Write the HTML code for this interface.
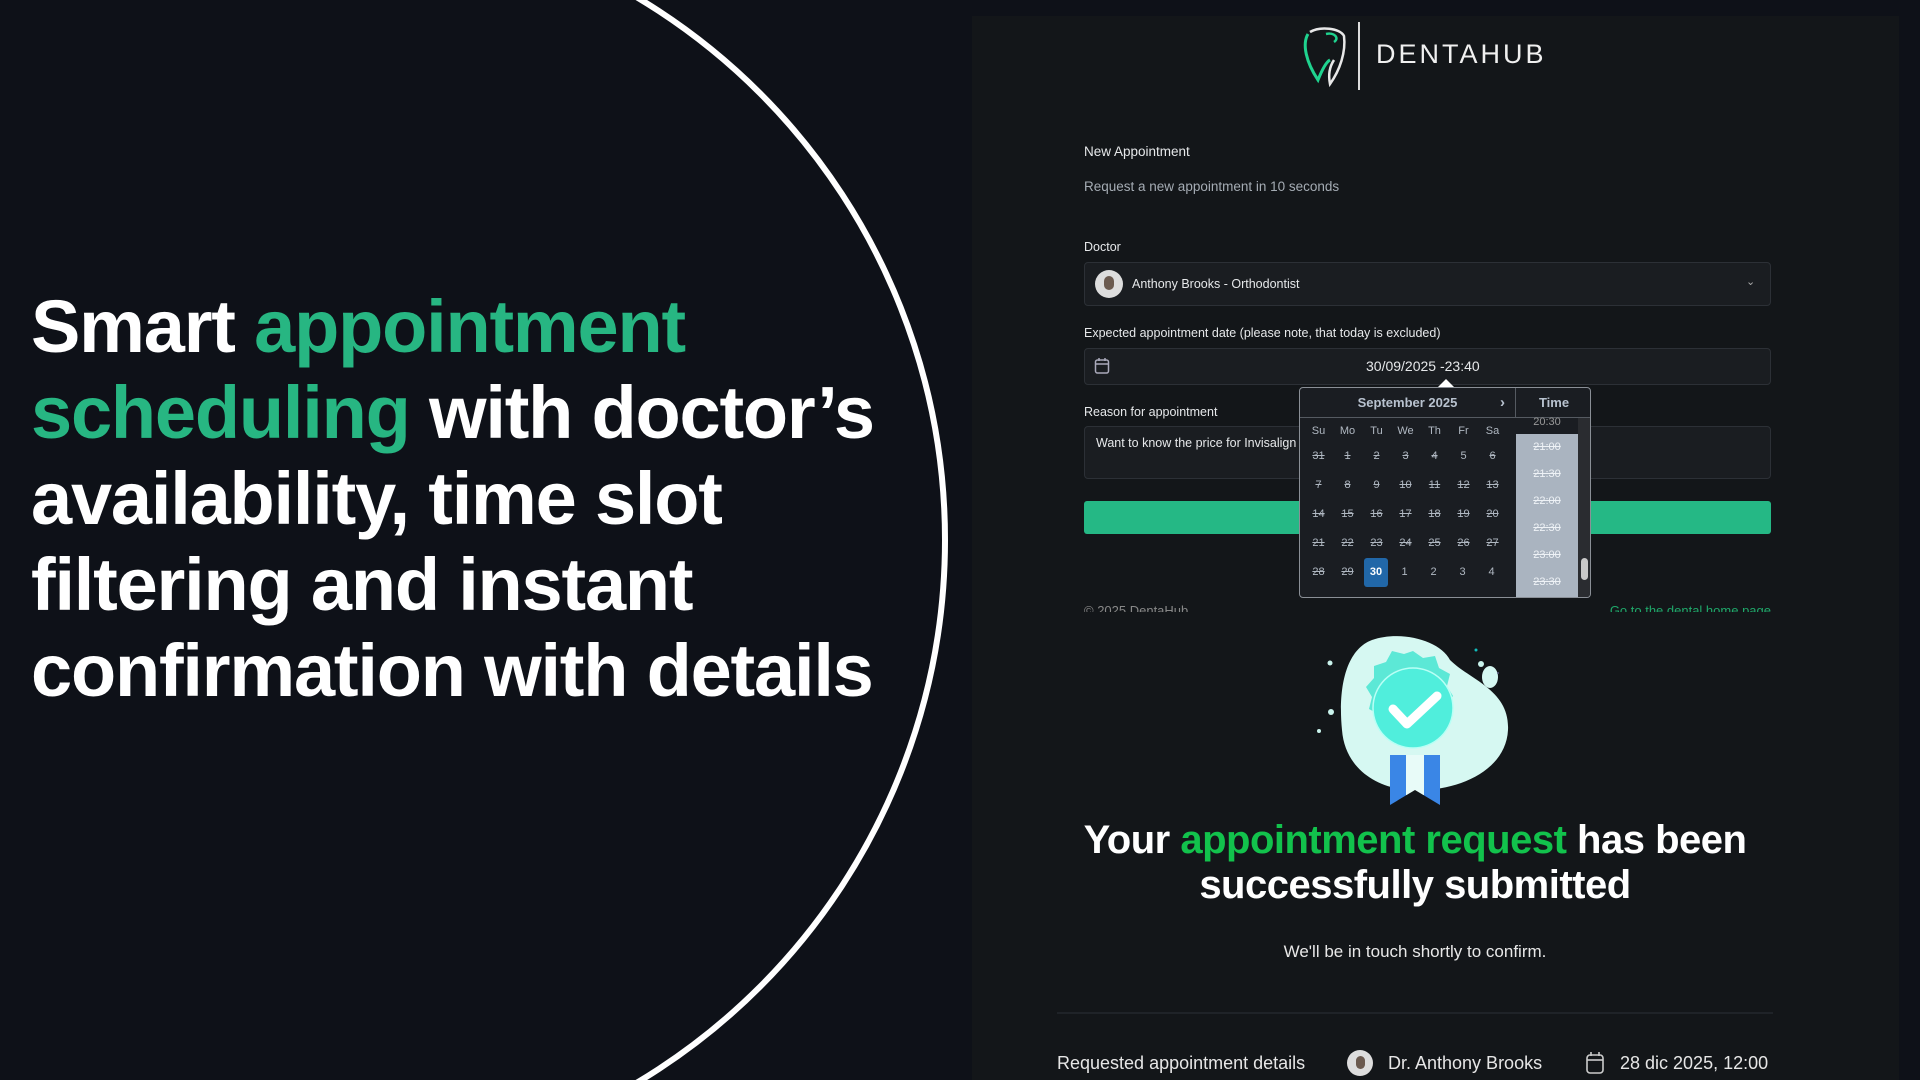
<!DOCTYPE html>
<html><head><meta charset="utf-8"><style>
*{margin:0;padding:0;box-sizing:border-box}
html{overflow:hidden}
body{width:1920px;height:1080px;overflow:hidden;background:#0e1118;font-family:"Liberation Sans",sans-serif;position:relative}
.hero{position:absolute;left:31px;top:284px;font-weight:700;font-size:74px;line-height:86px;color:#fff;letter-spacing:-1.2px;white-space:nowrap}
.hero .g{color:#27b682}
.card{position:absolute;left:972px;top:16px;width:927px;height:1064px;background:#131619}
.f{position:absolute;color:#e6e8ea;font-size:13.5px}
.box{position:absolute;left:1084px;width:687px;border:1px solid #2c3036;border-radius:4px;background:#1a1d21}
.cal{position:absolute;left:1299px;top:387px;width:292px;height:211px;background:#1a1d22;border:1px solid #8a8f96;border-radius:4px;overflow:hidden}
.cal .hd{position:absolute;left:0;top:0;width:215px;height:30px;border-bottom:1px solid #555a61;color:#b8c2cf;font-weight:700;font-size:13px;text-align:center;line-height:30px}
.cal .th{position:absolute;left:215px;top:0;width:77px;height:30px;border-left:1px solid #555a61;border-bottom:1px solid #555a61;color:#b8c2cf;font-weight:700;font-size:13px;text-align:center;line-height:30px}
.grid{position:absolute;left:4px;top:32px;width:208px}
.grid div{display:inline-block;width:29px;text-align:center;font-size:11px;color:#b0b8c2;height:29px;line-height:29px}
.grid .d{text-decoration:line-through}
.grid .w{height:22px;line-height:22px}
.tl{position:absolute;left:216px;top:30px;width:62px;height:181px;background:#aab4c0}
.tl div{height:27px;line-height:27px;text-align:center;font-size:11px;color:#eef2f6;text-decoration:line-through}
</style></head><body>
<svg width="1920" height="1080" style="position:absolute;left:0;top:0">
<circle cx="313" cy="540" r="632" fill="none" stroke="#fff" stroke-width="6"/>
</svg>
<div class="hero">Smart <span class="g">appointment</span><br><span class="g">scheduling</span> with doctor’s<br>availability, time slot<br>filtering and instant<br>confirmation with details</div>

<div class="card"></div>
<svg style="position:absolute;left:1300px;top:22px" width="60" height="70" viewBox="0 0 60 70">
<path d="M8 12 C2 22 6 40 18 58 C22 48 26 40 30 38" fill="none" stroke="#1fd38f" stroke-width="3"/>
<path d="M10 10 C20 4 40 6 44 14 C46 30 40 48 30 62 C28 52 30 44 34 38" fill="none" stroke="#e8e8e8" stroke-width="2.5"/>
<path d="M26 12 C34 10 40 16 34 20" fill="none" stroke="#1fd38f" stroke-width="2.5"/>
<rect x="58" y="0" width="2" height="68" fill="#ddd"/>
</svg>
<div style="position:absolute;left:1376px;top:39px;color:#f0f0f0;font-size:27px;letter-spacing:3px">DENTAHUB</div>

<div class="f" style="left:1084px;top:144px">New Appointment</div>
<div class="f" style="left:1084px;top:179px;color:#a5acb4">Request a new appointment in 10 seconds</div>
<div class="f" style="left:1084px;top:240px;font-size:12.5px">Doctor</div>
<div class="box" style="top:262px;height:44px"></div>
<div style="position:absolute;left:1095px;top:270px;width:28px;height:28px;border-radius:50%;background:#ddd"><div style="width:10px;height:14px;border-radius:5px;background:#6b5a4f;margin:6px auto 0"></div></div>
<div class="f" style="left:1132px;top:277px;font-size:12.5px">Anthony Brooks - Orthodontist</div>
<div class="f" style="left:1746px;top:275px;color:#aaa;font-size:11px">⌄</div>
<div class="f" style="left:1084px;top:326px;font-size:12.5px">Expected appointment date (please note, that today is excluded)</div>
<div class="box" style="top:348px;height:37px"></div>
<svg style="position:absolute;left:1094px;top:357px" width="16" height="18"><rect x="1.5" y="3" width="13" height="13" rx="2" fill="none" stroke="#aab" stroke-width="1.5"/><line x1="1.5" y1="7" x2="14.5" y2="7" stroke="#aab" stroke-width="1.5"/><line x1="5" y1="1" x2="5" y2="4" stroke="#aab" stroke-width="1.5"/><line x1="11" y1="1" x2="11" y2="4" stroke="#aab" stroke-width="1.5"/></svg>
<div class="f" style="left:1366px;top:358px;font-size:14px">30/09/2025 -23:40</div>
<div class="f" style="left:1084px;top:405px;font-size:12.5px">Reason for appointment</div>
<div class="box" style="top:426px;height:53px"></div>
<div class="f" style="left:1096px;top:436px;font-size:12.5px">Want to know the price for Invisalign</div>
<div style="position:absolute;left:1084px;top:501px;width:687px;height:33px;background:#25b885;border-radius:3px"></div>
<div style="position:absolute;left:1084px;top:600px;width:687px;height:12px;overflow:hidden"><div style="font-size:13px;color:#888;position:absolute;top:3px">© 2025 DentaHub</div><div style="font-size:13px;color:#1fa86a;position:absolute;right:0;top:3px">Go to the dental home page</div></div>
<div style="position:absolute;left:1438px;top:379px;width:0;height:0;border-left:8px solid transparent;border-right:8px solid transparent;border-bottom:8px solid #fff"></div>
<div class="cal">
<div class="hd">September 2025<span style="position:absolute;right:10px;font-size:15px">›</span></div>
<div class="th">Time</div>
<div class="grid">
<div class="w">Su</div><div class="w">Mo</div><div class="w">Tu</div><div class="w">We</div><div class="w">Th</div><div class="w">Fr</div><div class="w">Sa</div>
<div class="d">31</div><div class="d">1</div><div class="d">2</div><div class="d">3</div><div class="d">4</div><div>5</div><div class="d">6</div>
<div class="d">7</div><div class="d">8</div><div class="d">9</div><div class="d">10</div><div class="d">11</div><div class="d">12</div><div class="d">13</div>
<div class="d">14</div><div class="d">15</div><div class="d">16</div><div class="d">17</div><div class="d">18</div><div class="d">19</div><div class="d">20</div>
<div class="d">21</div><div class="d">22</div><div class="d">23</div><div class="d">24</div><div class="d">25</div><div class="d">26</div><div class="d">27</div>
<div class="d">28</div><div class="d">29</div><div style="background:#2167a8;color:#fff;border-radius:3px;width:24px;margin:0 2px;font-weight:700">30</div><div>1</div><div>2</div><div>3</div><div>4</div>
</div>
<div style="position:absolute;left:216px;top:30px;width:62px;height:12px;background:#1a1d22;color:#999;font-size:11px;text-align:center;line-height:8px">20:30</div>
<div class="tl" style="top:46px"><div>21:00</div><div>21:30</div><div>22:00</div><div>22:30</div><div>23:00</div><div>23:30</div></div>
<div style="position:absolute;left:278px;top:30px;width:14px;height:181px;background:#2a2c30"><div style="position:absolute;left:3px;top:140px;width:7px;height:22px;background:#c8c8c8;border-radius:4px"></div></div>
</div>

<svg style="position:absolute;left:1310px;top:632px" width="210" height="180" viewBox="1310 632 210 180">
<path d="M1372 640 C1400 630 1440 640 1450 660 C1470 680 1510 690 1508 730 C1506 770 1460 790 1420 790 C1380 792 1345 770 1342 730 C1338 690 1345 650 1372 640 Z" fill="#d6f8f2"/>
<ellipse cx="1490" cy="677" rx="8" ry="11" fill="#d6f8f2"/>
<circle cx="1330" cy="663" r="2.5" fill="#c9f3ec"/><circle cx="1331" cy="712" r="3" fill="#c9f3ec"/><circle cx="1319" cy="731" r="2" fill="#c9f3ec"/><circle cx="1481" cy="664" r="3" fill="#c9f3ec"/><circle cx="1476" cy="650" r="1.5" fill="#1bb"/><circle cx="1498" cy="673" r="1" fill="#557"/>
<rect x="1390" y="755" width="50" height="50" fill="#3a86e6"/>
<rect x="1406" y="755" width="18" height="40" fill="#e8fbf8"/>
<path d="M1390 805 L1415 790 L1440 805 L1440 812 L1390 812 Z" fill="#131619"/>
<path d="M1413 651 l10 7 12 -2 4 12 11 6 -3 12 6 10 -8 9 0 12 -12 4 -6 11 -12 -3 -10 6 -9 -8 -12 0 -4 -12 -11 -6 3 -12 -6 -10 8 -9 0 -12 12 -4 6 -11 12 3 z" fill="#5ce8d6"/>
<circle cx="1413" cy="708" r="40" fill="#50eedc" stroke="#b8fff5" stroke-width="1.5"/>
<path d="M1393 709 L1407 724 L1437 696" fill="none" stroke="#fff" stroke-width="9" stroke-linecap="round" stroke-linejoin="round"/>
</svg>

<div style="position:absolute;left:972px;top:818px;width:886px;text-align:center;color:#fff;font-weight:700;font-size:40px;line-height:45px;letter-spacing:-0.5px">Your <span style="color:#12c24c">appointment request</span> has been<br>successfully submitted</div>
<div style="position:absolute;left:972px;top:942px;width:886px;text-align:center;color:#e8e8e8;font-size:17px">We'll be in touch shortly to confirm.</div>
<div style="position:absolute;left:1057px;top:1012px;width:716px;height:2px;background:#1f2328"></div>
<div style="position:absolute;left:1057px;top:1053px;color:#e6e6e6;font-size:18px">Requested appointment details</div>
<div style="position:absolute;left:1347px;top:1050px;width:26px;height:26px;border-radius:50%;background:#ddd"><div style="width:9px;height:13px;border-radius:5px;background:#6b5a4f;margin:6px auto 0"></div></div>
<div style="position:absolute;left:1388px;top:1053px;color:#e6e6e6;font-size:18px">Dr. Anthony Brooks</div>
<svg style="position:absolute;left:1585px;top:1051px" width="20" height="24"><rect x="2" y="4" width="16" height="18" rx="3" fill="none" stroke="#ccc" stroke-width="1.6"/><line x1="2" y1="9" x2="18" y2="9" stroke="#ccc" stroke-width="1.6"/><line x1="6" y1="1" x2="6" y2="5" stroke="#ccc" stroke-width="1.6"/><line x1="14" y1="1" x2="14" y2="5" stroke="#ccc" stroke-width="1.6"/></svg>
<div style="position:absolute;left:1620px;top:1053px;color:#e6e6e6;font-size:18px">28 dic 2025, 12:00</div>
</body></html>
